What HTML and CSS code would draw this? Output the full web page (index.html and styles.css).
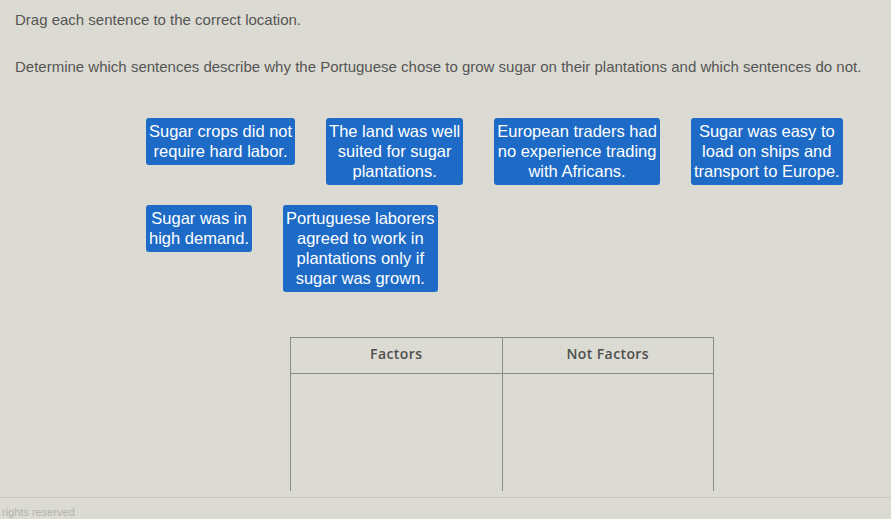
FILE: index.html
```html
<!DOCTYPE html>
<html lang="en">

<head>
    <meta charset="UTF-8">
    <title>Drag and Drop</title>
    <link rel="stylesheet" href="styles.css">
</head>

<body>

    <div class="question">
        <p class="instructions">Drag each sentence to the correct location.</p>
        <p class="prompt">Determine which sentences describe why the Portuguese chose to grow sugar on their plantations and which sentences do not.</p>

        <div class="tile-bank">
            <div class="tile-row">
                <div class="tile">Sugar crops did not<br>require hard labor.</div>
                <div class="tile">The land was well<br>suited for sugar<br>plantations.</div>
                <div class="tile">European traders had<br>no experience trading<br>with Africans.</div>
                <div class="tile">Sugar was easy to<br>load on ships and<br>transport to Europe.</div>
            </div>
            <div class="tile-row">
                <div class="tile">Sugar was in<br>high demand.</div>
                <div class="tile">Portuguese laborers<br>agreed to work in<br>plantations only if<br>sugar was grown.</div>
            </div>
        </div>

        <table class="drop-table">
            <thead>
                <tr>
                    <th>Factors</th>
                    <th>Not Factors</th>
                </tr>
            </thead>
            <tbody>
                <tr>
                    <td></td>
                    <td></td>
                </tr>
            </tbody>
        </table>
    </div>

    <footer class="footer">
        <span class="copyright">rights reserved</span>
    </footer>

</body>

</html>
```

FILE: styles.css
```css
* {
    box-sizing: border-box;
}

body {
    font-family: 'Liberation Sans', Arial, sans-serif;
    background: #dcdbd3;
    margin: 0;
    color: #555;
}

.question {
    padding: 10px 15px 0;
    height: 497px;
}

.instructions,
.prompt {
    margin: 0;
    font-size: 15px;
    line-height: 20px;
}

.prompt {
    margin-top: 27px;
}

.tile-bank {
    margin: 41px 0 0 131px;
}

.tile-row {
    display: flex;
    align-items: flex-start;
    gap: 31px;
    margin-bottom: 20px;
}

.tile {
    background: #1d6bc6;
    color: #fff;
    font-size: 16.5px;
    line-height: 20px;
    text-align: center;
    padding: 3px 3px 4px;
    border-radius: 3px;
}

.drop-table {
    border-collapse: collapse;
    width: 424px;
    margin: 45px 0 0 275px;
}

.drop-table th,
.drop-table td {
    width: 50%;
    border: 1px solid #8a8a86;
    border-bottom: none;
}

.drop-table th {
    height: 36px;
    padding-bottom: 6px;
    font-family: 'Open Sans', sans-serif;
    font-weight: 600;
    font-size: 14px;
    letter-spacing: 0.4px;
    color: #4f4f4f;
    border-bottom: 1px solid #8a8a86;
}

.drop-table td {
    height: 117px;
}

.footer {
    border-top: 1px solid #c9c9c2;
    height: 22px;
}

.copyright {
    display: inline-block;
    margin-left: 2px;
    margin-top: 8px;
    font-size: 11px;
    color: #b3b3ad;
}
```
